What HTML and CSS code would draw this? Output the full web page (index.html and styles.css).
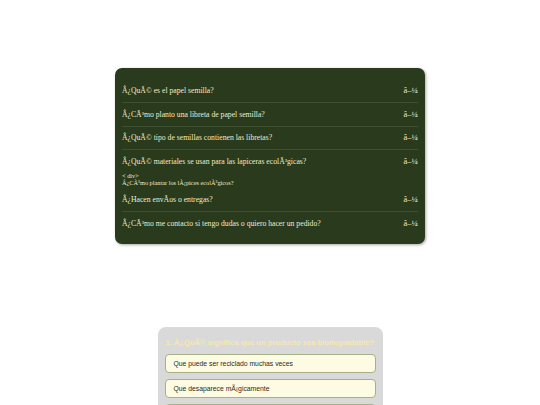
FILE: index.html
```html
<!DOCTYPE html>
<html lang="es">
<head>
<meta charset="utf-8">
<title>FAQ</title>
<link rel="stylesheet" href="styles.css">
</head>
<body>
<main class="page">
  <section class="faq">
    <div class="faq-item">
      <div class="faq-q"><span>Â¿QuÃ© es el papel semilla?</span><span class="arrow">â–¼</span></div>
    </div>
    <div class="faq-item">
      <div class="faq-q"><span>Â¿CÃ³mo planto una libreta de papel semilla?</span><span class="arrow">â–¼</span></div>
    </div>
    <div class="faq-item">
      <div class="faq-q"><span>Â¿QuÃ© tipo de semillas contienen las libretas?</span><span class="arrow">â–¼</span></div>
    </div>
    <div class="faq-item faq-broken">
      <div class="faq-q"><span>Â¿QuÃ© materiales se usan para las lapiceras ecolÃ³gicas?</span><span class="arrow">â–¼</span></div>
      <div class="stray">
        <div>&lt; div&gt;</div>
        <div>Â¿CÃ³mo plantar los lÃ¡pices ecolÃ³gicos?</div>
      </div>
    </div>
    <div class="faq-item">
      <div class="faq-q"><span>Â¿Hacen envÃ­os o entregas?</span><span class="arrow">â–¼</span></div>
    </div>
    <div class="faq-item">
      <div class="faq-q"><span>Â¿CÃ³mo me contacto si tengo dudas o quiero hacer un pedido?</span><span class="arrow">â–¼</span></div>
    </div>
  </section>

  <section class="quiz">
    <h2 class="quiz-title">1. Â¿QuÃ© significa que un producto sea biodegradable?</h2>
    <div class="quiz-options">
      <button class="opt">Que puede ser reciclado muchas veces</button>
      <button class="opt">Que desaparece mÃ¡gicamente</button>
      <button class="opt">Que se descompone de forma natural</button>
      <button class="opt">Que no se puede tirar a la basura</button>
    </div>
  </section>
</main>
</body>
</html>
```
FILE: styles.css
```css
html, body {
  margin: 0;
  padding: 0;
  background: #ffffff;
}
.page {
  display: flex;
  flex-direction: column;
  align-items: center;
  padding-top: 68px;
}
.faq {
  width: 310px;
  box-sizing: border-box;
  background: #293a1d;
  border-radius: 7px;
  padding: 11.5px 7px 9px 7px;
  box-shadow: 1px 1px 3px rgba(0,0,0,0.35);
  font-family: "Liberation Serif", "Times New Roman", serif;
  color: #efeacb;
}
.faq-item {
  border-bottom: 1px solid #3f4f31;
}
.faq-item:last-child {
  border-bottom: none;
}
.faq-broken {
  border-bottom: none;
}
.faq-q {
  display: flex;
  justify-content: space-between;
  align-items: center;
  font-size: 7.7px;
  line-height: 9.5px;
  padding: 6.5px 0;
}
.arrow {
  font-size: 8.5px;
  white-space: nowrap;
}
.stray {
  font-size: 6.3px;
  line-height: 7px;
  margin-top: -1px;
  padding-bottom: 3px;
}
.quiz {
  margin-top: 83px;
  width: 225px;
  box-sizing: border-box;
  background: #d9d9d9;
  border-radius: 8px;
  padding: 11px 7px 10px 7px;
  font-family: "Liberation Sans", Arial, sans-serif;
}
.quiz-title {
  margin: 0 0 7px 1px;
  font-family: "Liberation Sans", Arial, sans-serif;
  font-size: 7.6px;
  line-height: 9.5px;
  font-weight: bold;
  white-space: nowrap;
  color: #f4e8b0;
}
.quiz-options {
  display: flex;
  flex-direction: column;
  gap: 6px;
}
.opt {
  display: block;
  width: 100%;
  text-align: left;
  font-family: "Liberation Sans", Arial, sans-serif;
  font-size: 6.8px;
  line-height: 8px;
  color: #2a2a2a;
  background: #fdfbe1;
  border: 1px solid #a7b188;
  border-radius: 4px;
  padding: 4.5px 8px;
  margin: 0;
}
```
